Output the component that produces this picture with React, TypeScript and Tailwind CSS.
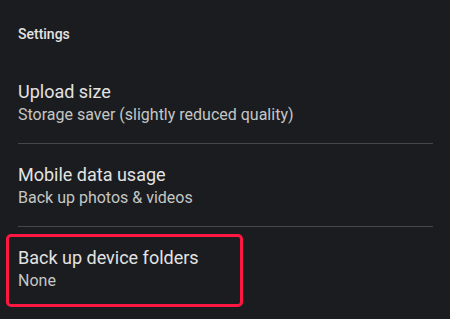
import React from "react";

const font = { fontFamily: "Roboto, 'Noto Sans', sans-serif" };

function Row({ title, sub }: { title: string; sub: string }) {
  return (
    <div className="pt-[19px] pb-[17px]">
      <div className="text-[18px] leading-[24px] text-[#e3e3e3]">{title}</div>
      <div className="text-[16px] leading-[22px] text-[#c4c7c5]">{sub}</div>
    </div>
  );
}

export default function App() {
  return (
    <div
      className="w-[450px] h-[319px] overflow-hidden bg-[#1b1c1f] pl-[18px] pr-[17px] pt-[24px]"
      style={font}
    >
      <div className="text-[14px] leading-[20px] font-medium text-[#e3e3e3] mb-[17px]">Settings</div>
      <Row title="Upload size" sub="Storage saver (slightly reduced quality)" />
      <div className="h-px bg-[#444749]" />
      <Row title="Mobile data usage" sub="Back up photos & videos" />
      <div className="h-px bg-[#444749]" />
      <div className="relative">
        <Row title="Back up device folders" sub="None" />
        <div className="absolute left-[-12px] top-[7px] w-[237px] h-[73px] border-[3px] border-[#ff1744] rounded-[5px]" />
      </div>
    </div>
  );
}
